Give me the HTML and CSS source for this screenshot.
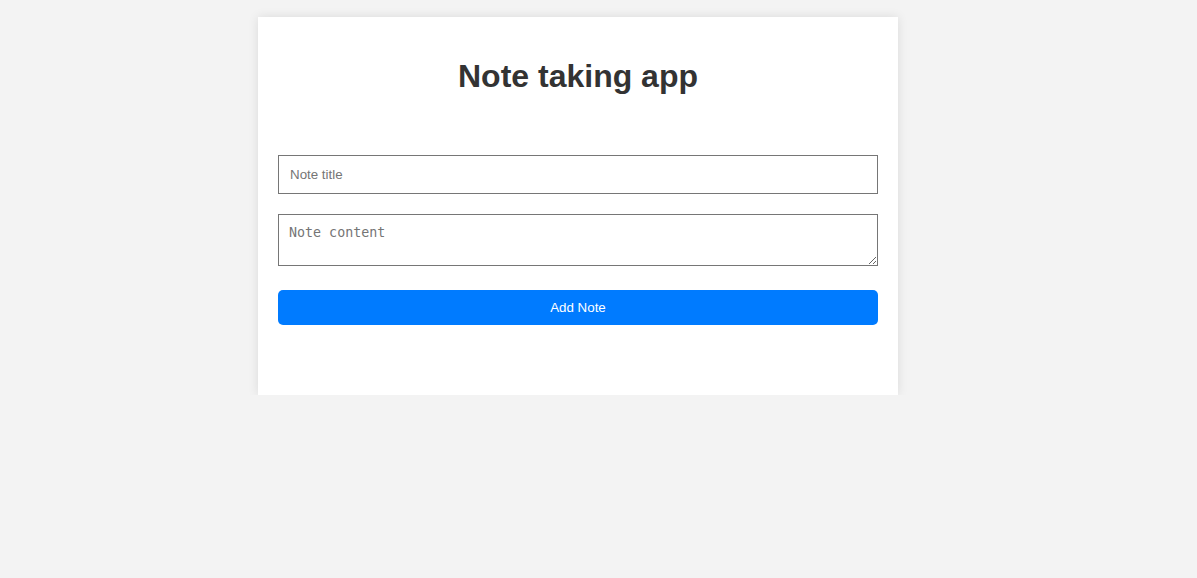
FILE: index.html
```html
<!DOCTYPE html>
<html>
<head>
<meta charset="utf-8">
<link rel="stylesheet" href="styles.css">
</head>
<body>
<div class="card">
  <h1 class="title">Note taking app</h1>
  <form class="note-form">
    <input class="field" type="text" placeholder="Note title">
    <textarea class="field area" placeholder="Note content"></textarea>
    <button class="btn" type="button">Add Note</button>
  </form>
  <div class="notes"></div>
</div>
</body>
</html>
```
FILE: styles.css
```css
html, body {
  margin: 0;
  padding: 0;
}
body {
  background: #f3f3f3;
  font-family: "Liberation Sans", Arial, sans-serif;
  padding-top: 17px;
}
.card {
  width: 600px;
  margin: 0 0 0 258px;
  background: #fff;
  padding: 20px 20px 70px;
  box-shadow: 0 0 10px rgba(0, 0, 0, 0.1);
}
.title {
  margin: 21px 0 0;
  font-size: 32px;
  line-height: 37px;
  text-align: center;
  color: #333;
  font-weight: bold;
}
.note-form {
  display: flex;
  flex-direction: column;
  gap: 20px;
  margin-top: 60px;
}
.field {
  display: block;
  width: 100%;
  box-sizing: border-box;
  padding: 10px;
  border: 1px solid #767676;
  font-size: 13.333px;
  margin: 0;
}
input.field {
  height: 39px;
  padding-left: 11px;
  font-family: "Liberation Sans", Arial, sans-serif;
}
.area {
  height: 52px;
  font-family: "DejaVu Sans Mono", monospace;
  resize: vertical;
}
.btn {
  display: block;
  width: 100%;
  height: 35px;
  margin-top: 4px;
  background: #007bff;
  color: #fff;
  border: none;
  border-radius: 5px;
  font-family: "Liberation Sans", Arial, sans-serif;
  font-size: 13.333px;
  cursor: pointer;
}
```
